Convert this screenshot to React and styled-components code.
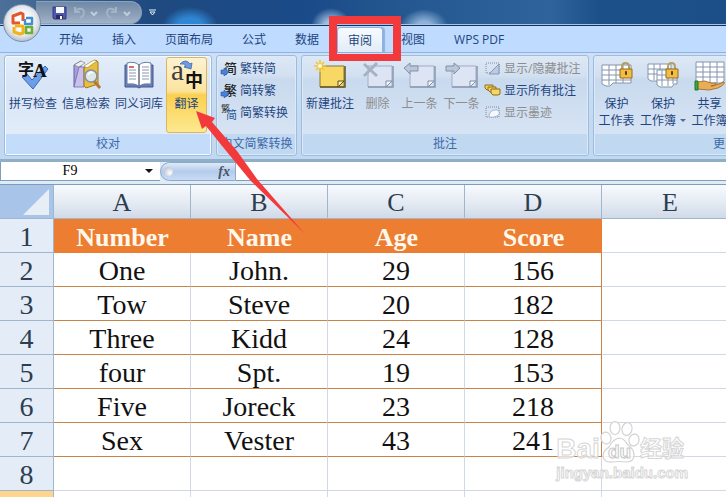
import styled, { createGlobalStyle } from "styled-components";

const GlobalStyle = createGlobalStyle`
  * {
    box-sizing: border-box;
  }
  body {
    margin: 0;
    background: #fff;
    font-family: "Open Sans", "Noto Sans CJK SC", sans-serif;
    font-size: 12px;
    color: #1e3e6e;
  }
  button, input {
    font: inherit;
    color: inherit;
    border: 0;
    margin: 0;
    padding: 0;
    background: none;
  }
  svg {
    overflow: visible;
  }
`;

const Window = styled.div`
  position: relative;
  display: flex;
  flex-direction: column;
  height: 100vh;
  overflow: hidden;
`;

/* title bar */

const TitleBar = styled.header`
  display: flex;
  flex: none;
  height: 26px;
  padding: 1px 0 1px 36px;
  border-bottom: 1px solid #12335e;
  box-shadow: inset 0 -1px #a9c3e0;
  background:
    radial-gradient(ellipse 28px 20px at 190px 27px, #2f87d4 45%, transparent 100%),
    radial-gradient(ellipse 20px 18px at 331px 26px, #9dbfe2 30%, transparent 100%),
    radial-gradient(ellipse 24px 18px at 424px 27px, #8fb3da 30%, transparent 100%),
    linear-gradient(90deg, #4c7099 0, #1f4a80 150px, #1a4a88 300px, #24578f 400px, #2e639c 550px, #1c5089 600px, #1c4f88 100%);
`;

const QuickAccess = styled.div`
  display: flex;
  align-items: center;
  gap: 5px;
  width: 106px;
  height: 23px;
  padding-left: 16px;
  border: 1px solid #8aa2bd;
  border-left: 0;
  border-radius: 0 12px 12px 0;
  background: linear-gradient(#7189a6, #8b9fb8 60%, #a3b4c8);
`;

const IconButton = styled.button`
  display: flex;
  align-items: center;
  justify-content: center;
  flex: none;
  svg {
    display: block;
  }
`;

const CustomizeButton = styled(IconButton)`
  width: 20px;
  height: 23px;
`;

const OfficeButton = styled.button`
  position: absolute;
  top: 4px;
  left: 3px;
  z-index: 2;
  width: 38px;
  height: 38px;
  border: 1px solid #7c8ea8;
  border-radius: 50%;
  background: radial-gradient(circle at 50% 45%, #fff 25%, #e3e7ed 55%, #b4bfce 75%, #e9eef5 95%);
  svg {
    display: block;
    margin: auto;
  }
`;

/* tabs */

const TabBar = styled.nav`
  display: flex;
  flex: none;
  gap: 7px;
  height: 26px;
  padding: 1px 0 0 48px;
  background: #bfdbff;
`;

const Tab = styled.button`
  position: relative;
  flex: none;
  padding: 0 11px;
  line-height: 24px;
  color: #1e4580;
  white-space: nowrap;
  ${({ $active }) => $active ? `
    border: 1px solid #8db2e3;
    border-bottom: 0;
    border-radius: 4px 4px 0 0;
    padding: 0 10px;
    line-height: 23px;
    background: linear-gradient(#f7fbff, #e2ecf8);
    box-shadow: 2px 0 1px #8fb0da;
  ` : ``}
`;

const Highlight = styled.span`
  position: absolute;
  top: -12px;
  left: -9px;
  z-index: 3;
  width: 72px;
  height: 45px;
  border: 8px solid #f23a3c;
  border-bottom-width: 7px;
  pointer-events: none;
`;

/* ribbon */

const Ribbon = styled.section`
  display: flex;
  flex: none;
  gap: 4px;
  height: 110px;
  padding: 2px 0 3px 4px;
  overflow: hidden;
  border-top: 1px solid #8db2e3;
  border-bottom: 3px solid #8fafc6;
  background: linear-gradient(#cfe0f4, #c5daf0 60%, #c1d8f2);
`;

const Group = styled.div`
  display: flex;
  flex: none;
  flex-direction: column;
  width: ${({ $width }) => $width}px;
  border: 1px solid #9dbde0;
  border-radius: 3px;
  box-shadow: inset 0 0 0 1px ${({ $active }) => $active ? "#f4faff" : "#dde9f6"};
  background: ${({ $active }) => $active
    ? "linear-gradient(#e4edf9, #d8e5f6 30%, #e6effb)"
    : "linear-gradient(#dde8f5, #d2e0f1 20%, #c9daee 24%, #dbe7f6)"};
`;

const GroupBody = styled.div`
  display: flex;
  flex: 1;
  gap: 1px;
  padding: 1px 2px;
`;

const GroupTitle = styled.div`
  height: 20px;
  margin: 0 1px 1px;
  line-height: 19px;
  text-align: center;
  white-space: nowrap;
  color: #3e6aaa;
  background: ${({ $active }) => $active ? "#c3dcfa" : "#c0d8f0"};
`;

const LargeButton = styled.button`
  display: flex;
  flex: none;
  flex-direction: column;
  align-items: center;
  min-width: 41px;
  padding: 2px;
  line-height: 17px;
  white-space: nowrap;
  color: #1e4580;
  svg {
    flex: none;
    margin-bottom: 4px;
  }
  &:disabled {
    color: #8d8d8d;
  }
  ${({ $hot }) => $hot ? `
    padding: 1px;
    border: 1px solid #dbb561;
    border-radius: 3px;
    background: linear-gradient(#fdf3d3, #fbe39e 45%, #fbd050 50%, #fde98f);
  ` : ``}
`;

const LabelRow = styled.span`
  display: flex;
  align-items: center;
  gap: 4px;
`;

const Caret = styled.i`
  border: 3px solid transparent;
  border-top-color: #4f6c95;
  border-bottom: 0;
`;

const SmallList = styled.div`
  display: flex;
  flex-direction: column;
  padding: 0 2px;
`;

const SmallButton = styled.button`
  display: flex;
  align-items: center;
  gap: 3px;
  height: 22px;
  white-space: nowrap;
  color: #1e4580;
  &:disabled {
    color: #8d8d8d;
  }
`;

/* formula bar */

const FormulaBar = styled.div`
  display: flex;
  flex: none;
  height: 23px;
  padding-bottom: 3px;
  border-bottom: 1px solid #7f9db9;
  background: #e0ecf5;
`;

const NameBox = styled.label`
  display: flex;
  align-items: center;
  width: 160px;
  border: 1px solid #7f9db9;
  border-width: 0 0 1px 1px;
  background: #fff;
`;

const NameInput = styled.input`
  width: 138px;
  height: 18px;
  text-align: center;
  color: #000;
  font-family: "Liberation Serif", serif;
  font-size: 14px;
`;

const FxArea = styled.div`
  display: flex;
  align-items: center;
  justify-content: space-between;
  width: 76px;
  padding: 0 5px 0 3px;
  border: 1px solid #8ca9cc;
  border-radius: 10px 0 0 10px;
  background: linear-gradient(#dfeafa, #b4cbea 50%, #cadcf5);
`;

const Knob = styled.span`
  width: 9px;
  height: 9px;
  border-radius: 50%;
  background: radial-gradient(circle at 65% 65%, #fff, #a7b4c8);
`;

const FxButton = styled.button`
  font-family: "Liberation Serif", serif;
  font-size: 14px;
  line-height: 16px;
  font-style: italic;
  font-weight: bold;
  color: #4a5566;
`;

const FormulaInput = styled.input`
  flex: 1;
  min-width: 0;
  border-bottom: 1px solid #7f9db9;
  background: #fff;
`;

/* sheet */

const SheetArea = styled.main`
  flex: 1;
  min-height: 0;
  overflow: hidden;
`;

const Sheet = styled.table`
  width: 739px;
  table-layout: fixed;
  border-spacing: 0;
  font-family: "Liberation Serif", serif;
  font-size: 28px;
  line-height: 31px;
  text-align: center;
  color: #111;
  th, td {
    height: 34px;
    padding: 2px 0 0;
  }
`;

const Corner = styled.td`
  width: 54px;
  border: 1px solid #9eb6ce;
  border-width: 0 1px 1px 0;
  background: #a9c4e9;
  svg {
    display: block;
    margin: 0 3px 0 auto;
  }
`;

const ColumnHead = styled.th`
  border-right: 1px solid #9eb6ce;
  border-bottom: 1px solid #9eb6ce;
  font-weight: normal;
  font-size: 26px;
  color: #2c3e50;
  background: linear-gradient(#f8fafd, #e6ecf4 50%, #d0dae8);
`;

const RowHead = styled.th`
  border-right: 1px solid #9eb6ce;
  border-bottom: 1px solid #9eb6ce;
  font-weight: normal;
  color: #2c3e50;
  background: ${({ $current }) => $current ? "#ffd58d" : "#e4ecf7"};
`;

const Cell = styled.td`
  border-right: 1px solid ${({ $edge }) => $edge ? "#c98346" : "#d0d7e5"};
  border-bottom: 1px solid ${({ $filled }) => $filled ? "#c98346" : "#d0d7e5"};
`;

const TitleCell = styled.td`
  font-size: 26px;
  font-weight: bold;
  color: #fff8ec;
  background: #ed7d31;
`;

const Arrow = styled.svg`
  position: absolute;
  top: 108px;
  left: 192px;
  z-index: 4;
  pointer-events: none;
`;

const Watermark = styled.div`
  position: absolute;
  right: 38px;
  bottom: 15px;
  color: rgba(255, 255, 255, 0.7);
  -webkit-text-stroke: 1px #d6d6d6;
  font-family: "Liberation Sans", "Noto Sans CJK SC", sans-serif;
  font-weight: bold;
  font-size: 15px;
  line-height: 18px;
`;

const WatermarkLogo = styled.div`
  display: flex;
  align-items: flex-end;
  font-size: 28px;
  line-height: 30px;
  span {
    font-size: 22px;
  }
`;

const cjk = '"Noto Sans CJK SC", sans-serif';
const serif = '"Liberation Serif", serif';

const OfficeLogo = () => (
  <svg width="27" height="27" viewBox="0 0 27 27" fill="none" strokeWidth="3" strokeLinejoin="round">
    <path d="M11 13H4V6l8-3 2 1v7" stroke="#e2572b" />
    <path d="M17 8h6v6h-7V9" stroke="#3f8fd2" strokeWidth="2.4" />
    <path d="M5 17v5l6 2 3-1v-7H6" stroke="#f2b21c" />
    <path d="M17 17h6v6h-6z" stroke="#6fae36" strokeWidth="2.6" />
  </svg>
);

const SaveIcon = () => (
  <svg width="15" height="14" viewBox="0 0 15 14">
    <path d="M1 1h13v12H2l-1-1z" fill="#5256ad" stroke="#333a85" />
    <path d="M4 1h8v6H4z" fill="#f5f8fd" />
    <path d="M4 9h7v4H4z" fill="#252e68" />
    <path d="M8 10h2v3H8z" fill="#fff" />
  </svg>
);

const UndoIcon = ({ flip }) => (
  <svg width="28" height="14" viewBox="0 0 28 14" fill="none" stroke="#a3b2c5" strokeWidth="2">
    <g transform={flip ? "matrix(-1 0 0 1 14 0)" : undefined}>
      <path d="M3 1v5h5M3 6c3-5 9-4 9 1 0 3-2 4-4 5" />
    </g>
    <path d="M19 6l3 3 3-3" stroke="#c0ccd9" />
  </svg>
);

const SpellIcon = () => (
  <svg width="32" height="32" viewBox="0 0 32 32">
    <path d="M5 18l5-3 5 6L28 7l3 3-15 20z" fill="#6d9fe6" stroke="#3768b8" />
    <text x="1" y="16" fontFamily={cjk} fontSize="16" fontWeight="bold" fill="#111">字</text>
    <text x="16" y="18" fontFamily={serif} fontSize="19" fontWeight="bold" fill="#111">A</text>
  </svg>
);

const ResearchIcon = () => (
  <svg width="32" height="32" viewBox="0 0 32 32">
    <path d="M4 6l7-4v22l-7 4z" fill="#a99edc" stroke="#6a61a5" />
    <path d="M4 6l7-4 4 2-6 4z" fill="#eee" stroke="#777" strokeWidth=".6" />
    <path d="M9 8h5v20H4z" fill="#c8c1ed" stroke="#6a61a5" strokeWidth=".7" />
    <path d="M14 9l12-8 2 2v22l-12 4-2-2z" fill="#e9bd3e" stroke="#a1771c" />
    <path d="M14 7L24 1l3 1-10 7z" fill="#fffbe9" stroke="#a1771c" strokeWidth=".6" />
    <path d="M24 22l6 7" stroke="#b37a35" strokeWidth="3" />
    <circle cx="21" cy="17" r="6" fill="#dcecf8" fillOpacity=".9" stroke="#8292a5" strokeWidth="1.6" />
    <path d="M18 16q2-4 5-2" stroke="#fff" strokeWidth="1.5" fill="none" />
  </svg>
);

const BookIcon = () => (
  <svg width="32" height="32" viewBox="0 0 32 32">
    <path d="M2 6h28v22H18l-2 1-2-1H2z" fill="#6680ba" stroke="#43578c" />
    <path d="M4 4q8-2 12 2 4-4 12-2v21q-8-1-12 2-4-3-12-2z" fill="#fff" stroke="#6a7ba3" />
    <path d="M16 6v21" stroke="#626a7c" strokeWidth="1.5" />
    <path d="M6 11h7M6 14h7M6 17h7M6 20h7M19 8h7M19 11h7M19 14h7M19 17h7M19 20h7" stroke="#8b97ad" />
    <path d="M6 8h5" stroke="#c23c3c" strokeWidth="1.5" />
  </svg>
);

const TranslateIcon = () => (
  <svg width="32" height="32" viewBox="0 0 32 32">
    <text x="0" y="21" fontFamily={serif} fontSize="29" fill="#3c3c3c">a</text>
    <text x="14" y="28" fontFamily={cjk} fontSize="18" fontWeight="bold" fill="#111">中</text>
    <path d="M9 5q6-6 10 0l2-1-1 6-7-2 2-1q-2-3-6-2z" fill="#6c9be0" stroke="#3467b4" strokeWidth=".8" />
  </svg>
);

const ConvertIcon = ({ glyph }) => (
  <svg width="16" height="16" viewBox="0 0 16 16">
    <text x="3" y="13" fontFamily={cjk} fontSize="13" fontWeight="500" fill="#222">{glyph}</text>
    <path d="M0 10h3V8l5 4-5 4v-2H0z" fill="#4681dc" stroke="#2658a8" strokeWidth=".6" />
  </svg>
);

const BothIcon = () => (
  <svg width="16" height="16" viewBox="0 0 16 16" fontFamily={cjk}>
    <text x="0" y="8" fontSize="9" fill="#333">繁</text>
    <text x="5" y="15" fontSize="11" fill="#27538f">简</text>
  </svg>
);

const NoteIcon = ({ kind }) => {
  const isNew = kind === "new";
  return (
    <svg width="32" height="32" viewBox="0 0 32 32">
      <path d="M6 7h24v21H6z" fill={isNew ? "#f8d865" : "#dde5f4"} stroke={isNew ? "#8a7634" : "#a0adc8"} />
      <path d="M6 28h25V7" fill="none" stroke={isNew ? "#645525" : "#8b98b3"} strokeWidth="1.5" />
      <path d="M24 28v-6h6z" fill={isNew ? "#fff2b7" : "#f5f8fd"} stroke={isNew ? "#5c4c17" : "#7f8da8"} />
      {isNew && (
        <g stroke="#f3c72b" strokeWidth="1.6">
          <path d="M6 1v12M0 7h12M2 3l8 8M10 3l-8 8" />
          <circle cx="6" cy="7" r="2" fill="#fffce0" stroke="none" />
        </g>
      )}
      {kind === "delete" && <path d="M2 5l13 12M15 4L2 17" stroke="#a7b1c3" strokeWidth="3" />}
      {kind === "prev" && <path d="M0 9l6-5v3h8v5H6v3z" fill="#bbc6d8" stroke="#8391aa" />}
      {kind === "next" && <path d="M14 9L8 4v3H0v5h8v3z" fill="#bbc6d8" stroke="#8391aa" />}
    </svg>
  );
};

const FrameIcon = ({ ink }) => (
  <svg width="16" height="16" viewBox="0 0 16 16">
    <path d="M1 3h13v10H1z" fill="none" stroke="#7f8da5" strokeDasharray="1 1" />
    {ink
      ? <path d="M4 11q2-6 9-5 3 4-1 6t-8 1z" fill="#f5f8fd" stroke="#99a8bf" strokeWidth=".8" />
      : <path d="M14 4v10H4z" fill="#bccbe2" stroke="#7888a4" strokeWidth=".8" />}
  </svg>
);

const StackIcon = () => (
  <svg width="16" height="16" viewBox="0 0 16 16" fill="#f6d565" stroke="#8d6c19">
    <path d="M0 3h8v4l-1 1H2L0 6z" />
    <path d="M3 5h8v4l-1 1H5L3 8z" />
    <path d="M6 7h9v5l-2 1H8l-2-2z" />
  </svg>
);

const GridIcon = ({ kind }) => (
  <svg width="32" height="32" viewBox="0 0 32 32">
    {kind === "book" && (
      <g fill="#fff" stroke="#8494ae">
        <path d="M1 5h23v15h-4l-2 2H4l-3-2z" />
        <path d="M1 10h23M1 15h23M7 5v16M13 5v16" />
        <path d="M10 11h20v14h-3l-2 3H13l-3-2z" />
        <path d="M10 16h20M10 21h20M15 11v16M21 11v16M26 11v14" />
      </g>
    )}
    {kind === "sheet" && (
      <g fill="#fff" stroke="#8494ae">
        <path d="M1 6h29v18h-18l-3 3H5l-4-2z" />
        <path d="M1 11h29M1 16h29M1 21h29M8 6v20M15 6v18M22 6v18" />
      </g>
    )}
    {kind === "share" && (
      <g fill="#fff" stroke="#8494ae">
        <path d="M2 3h28v19l-3 2H2z" />
        <path d="M2 8h28M2 13h28M2 18h28M9 3v21M16 3v21M23 3v21" />
      </g>
    )}
    {kind === "share"
      ? (
        <>
          <path d="M3 23l8-1 6 2h5q0 3-5 3l8-2 5-2q2 2-6 6l-9 2-12-1z" fill="#e9ad57" stroke="#98652a" strokeWidth=".8" />
          <path d="M1 22h3v9H1z" fill="#3aa83f" stroke="#217627" />
        </>
      )
      : (
        <>
          <path d="M21 11V8q0-4 3.500-4t3.500 4v3" fill="none" stroke="#b39f68" strokeWidth="2" />
          <path d="M19 10h12v9H19z" fill="#f2bd45" stroke="#9a6b16" />
          <path d="M25 12v4M24 14h2" stroke="#53370a" strokeWidth="1.5" />
        </>
      )}
  </svg>
);

const Paw = () => (
  <svg width="40" height="44" viewBox="0 0 40 44" fill="#fff" fillOpacity=".7" stroke="#d3d3d3" strokeWidth="1.2">
    <ellipse cx="6" cy="18" rx="5" ry="6" transform="rotate(-12 6 18)" />
    <ellipse cx="15" cy="8" rx="5" ry="6.500" />
    <ellipse cx="27" cy="9" rx="5" ry="6.500" transform="rotate(12 27 9)" />
    <ellipse cx="34" cy="20" rx="5" ry="6" transform="rotate(15 34 20)" />
    <path d="M19 18q5 0 8 6 7 5 7 11 0 7-8 7-7-1-13 0-9 1-10-6 0-5 6-9 4-8 10-9z" />
    <text x="8" y="38" fontSize="19" stroke="#c8c8c8" strokeWidth="1">du</text>
  </svg>
);

const tabs = ["开始", "插入", "页面布局", "公式", "数据", "审阅", "视图", "WPS PDF"];
const columns = ["A", "B", "C", "D", "E"];
const titles = ["Number", "Name", "Age", "Score"];
const rows = [
  ["One", "John.", 29, 156],
  ["Tow", "Steve", 20, 182],
  ["Three", "Kidd", 24, 128],
  ["four", "Spt.", 19, 153],
  ["Five", "Joreck", 23, 218],
  ["Sex", "Vester", 43, 241],
  [],
  [],
];

const App = () => (
  <Window>
    <GlobalStyle />
    <TitleBar>
      <QuickAccess>
        <IconButton aria-label="保存"><SaveIcon /></IconButton>
        <IconButton aria-label="撤消" disabled><UndoIcon /></IconButton>
        <IconButton aria-label="恢复" disabled><UndoIcon flip /></IconButton>
      </QuickAccess>
      <CustomizeButton aria-label="自定义快速访问工具栏">
        <svg width="7" height="7" viewBox="0 0 7 7" fill="none" stroke="#e6eef8">
          <path d="M0 1h7M1 3h5L3.500 6z" />
        </svg>
      </CustomizeButton>
    </TitleBar>
    <OfficeButton aria-label="Office"><OfficeLogo /></OfficeButton>

    <TabBar>
      {tabs.map((tab) => (
        <Tab key={tab} $active={tab === "审阅"}>
          {tab}
          {tab === "审阅" && <Highlight />}
        </Tab>
      ))}
    </TabBar>

    <Ribbon>
      <Group $width={208} $active>
        <GroupBody>
          <LargeButton><SpellIcon />拼写检查</LargeButton>
          <LargeButton><ResearchIcon />信息检索</LargeButton>
          <LargeButton><BookIcon />同义词库</LargeButton>
          <LargeButton $hot><TranslateIcon />翻译</LargeButton>
        </GroupBody>
        <GroupTitle $active>校对</GroupTitle>
      </Group>
      <Group $width={81}>
        <GroupBody>
          <SmallList>
            <SmallButton><ConvertIcon glyph="简" />繁转简</SmallButton>
            <SmallButton><ConvertIcon glyph="繁" />简转繁</SmallButton>
            <SmallButton><BothIcon />简繁转换</SmallButton>
          </SmallList>
        </GroupBody>
        <GroupTitle>中文简繁转换</GroupTitle>
      </Group>
      <Group $width={288}>
        <GroupBody>
          <LargeButton><NoteIcon kind="new" />新建批注</LargeButton>
          <LargeButton disabled><NoteIcon kind="delete" />删除</LargeButton>
          <LargeButton disabled><NoteIcon kind="prev" />上一条</LargeButton>
          <LargeButton disabled><NoteIcon kind="next" />下一条</LargeButton>
          <SmallList>
            <SmallButton disabled><FrameIcon />显示/隐藏批注</SmallButton>
            <SmallButton><StackIcon />显示所有批注</SmallButton>
            <SmallButton disabled><FrameIcon ink />显示墨迹</SmallButton>
          </SmallList>
        </GroupBody>
        <GroupTitle>批注</GroupTitle>
      </Group>
      <Group $width={264}>
        <GroupBody>
          <LargeButton><GridIcon kind="sheet" />保护<LabelRow>工作表</LabelRow></LargeButton>
          <LargeButton><GridIcon kind="book" />保护<LabelRow>工作簿<Caret /></LabelRow></LargeButton>
          <LargeButton><GridIcon kind="share" />共享<LabelRow>工作簿</LabelRow></LargeButton>
        </GroupBody>
        <GroupTitle>更改</GroupTitle>
      </Group>
    </Ribbon>

    <FormulaBar>
      <NameBox>
        <NameInput aria-label="名称框" defaultValue="F9" />
        <IconButton aria-label="名称列表">
          <svg width="20" height="18" viewBox="0 0 20 18"><path d="M6 7h8l-4 4z" fill="#111" /></svg>
        </IconButton>
      </NameBox>
      <FxArea>
        <Knob />
        <FxButton aria-label="插入函数">fx</FxButton>
      </FxArea>
      <FormulaInput aria-label="编辑栏" />
    </FormulaBar>

    <SheetArea>
      <Sheet>
        <thead>
          <tr>
            <Corner>
              <svg width="27" height="27" viewBox="0 0 27 27"><path d="M26 0v26H0z" fill="#e8eef5" /></svg>
            </Corner>
            {columns.map((column) => <ColumnHead key={column} scope="col">{column}</ColumnHead>)}
          </tr>
        </thead>
        <tbody>
          <tr>
            <RowHead scope="row">1</RowHead>
            {titles.map((title) => <TitleCell key={title}>{title}</TitleCell>)}
            <Cell />
          </tr>
          {rows.map((row, i) => (
            <tr key={i}>
              <RowHead scope="row" $current={i === 7}>{i + 2}</RowHead>
              {columns.map((column, j) => (
                <Cell key={column} $filled={row[j] !== undefined} $edge={j === 3 && row.length > 0}>
                  {row[j]}
                </Cell>
              ))}
            </tr>
          ))}
        </tbody>
      </Sheet>
    </SheetArea>

    <Arrow width="116" height="128" viewBox="192 108 116 128">
      <path d="M196 111L202 129L206 126L227 152L250 180L305 234L257 179L237 151L212 122L215 118Z" fill="#f23a3c" />
    </Arrow>
    <Watermark>
      <WatermarkLogo>Bai<Paw /><span>经验</span></WatermarkLogo>
      jingyan.baidu.com
    </Watermark>
  </Window>
);

export default App;
